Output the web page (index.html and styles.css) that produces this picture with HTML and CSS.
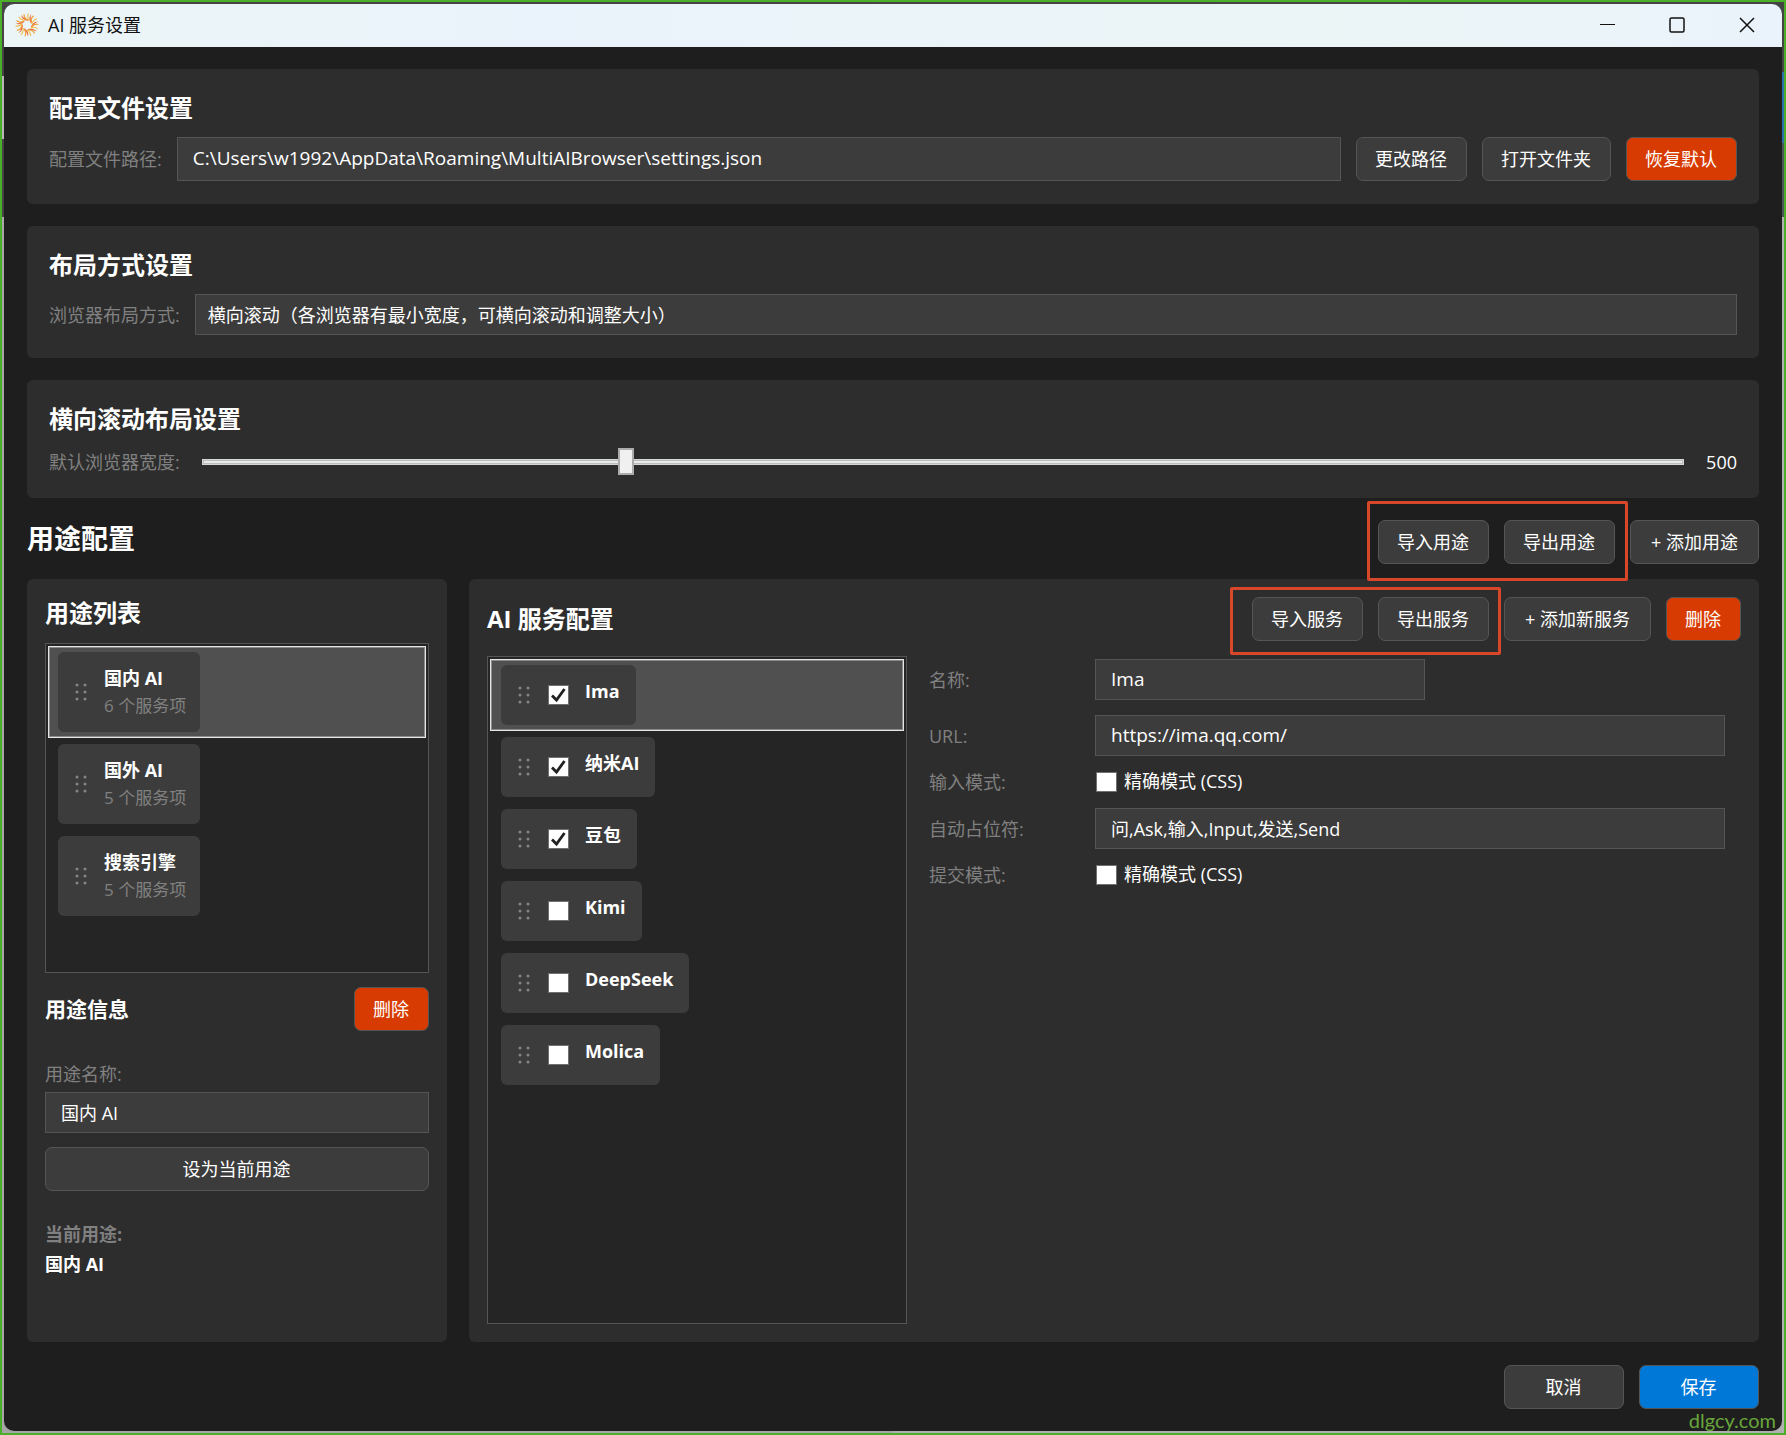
FILE: index.html
```html
<!DOCTYPE html>
<html lang="zh-CN">
<head>
    <meta charset="UTF-8">
    <title>AI 服务设置</title>
    <link rel="stylesheet" href="styles.css">
</head>
<body>
    <!-- 拖动手柄图标 -->
    <svg class="defs" aria-hidden="true">
        <symbol id="grip" viewBox="0 0 12 18">
            <g fill="#858585">
                <circle cx="2" cy="2" r="1.5"/><circle cx="10" cy="2" r="1.5"/>
                <circle cx="2" cy="9" r="1.5"/><circle cx="10" cy="9" r="1.5"/>
                <circle cx="2" cy="16" r="1.5"/><circle cx="10" cy="16" r="1.5"/>
            </g>
        </symbol>
    </svg>

    <div class="window">
        <!-- 标题栏 -->
        <header class="titlebar">
            <svg class="app-icon" viewBox="0 0 24 24" fill="none">
                <defs>
                    <g id="flame">
                        <path d="M12.500 7.800C9.500 7.200 6.500 5.500 6 1.800C7.500 4.500 10 5.500 14 7.500Z" fill="#e8683a"/>
                        <path d="M13 7C10.500 6 8.800 4 9 1" stroke="#f0a03c" stroke-width="1.200"/>
                        <path d="M10 7.500C7 7.200 5 6 3.800 3.800" stroke="#f3bd4e" stroke-width="1.100"/>
                    </g>
                </defs>
                <use href="#flame"/>
                <use href="#flame" transform="rotate(51.430 12 12)"/>
                <use href="#flame" transform="rotate(102.860 12 12)"/>
                <use href="#flame" transform="rotate(154.290 12 12)"/>
                <use href="#flame" transform="rotate(205.710 12 12)"/>
                <use href="#flame" transform="rotate(257.140 12 12)"/>
                <use href="#flame" transform="rotate(308.570 12 12)"/>
            </svg>
            <span class="window-title">AI 服务设置</span>
            <div class="window-controls">
                <button type="button" aria-label="最小化"><svg viewBox="0 0 16 16"><path class="thin" d="M1 7.500H16"/></svg></button>
                <button type="button" aria-label="最大化"><svg viewBox="0 0 16 16"><rect x="1" y="1" width="14" height="14" rx="1.500"/></svg></button>
                <button type="button" aria-label="关闭"><svg viewBox="0 0 16 16"><path d="M1 1L15 15M15 1L1 15"/></svg></button>
            </div>
        </header>

        <main class="content">
            <!-- 配置文件 -->
            <section class="card">
                <h2>配置文件设置</h2>
                <div class="row">
                    <label for="config-path">配置文件路径:</label>
                    <input id="config-path" class="field path latin" type="text" value="C:\Users\w1992\AppData\Roaming\MultiAIBrowser\settings.json" readonly>
                    <button type="button" class="btn">更改路径</button>
                    <button type="button" class="btn">打开文件夹</button>
                    <button type="button" class="btn danger">恢复默认</button>
                </div>
            </section>

            <!-- 布局方式 -->
            <section class="card">
                <h2>布局方式设置</h2>
                <div class="row">
                    <label for="layout-mode">浏览器布局方式:</label>
                    <select id="layout-mode" class="field">
                        <option>横向滚动（各浏览器有最小宽度，可横向滚动和调整大小）</option>
                    </select>
                </div>
            </section>

            <!-- 横向滚动布局 -->
            <section class="card">
                <h2>横向滚动布局设置</h2>
                <div class="row slider-row">
                    <label for="browser-width">默认浏览器宽度:</label>
                    <input id="browser-width" type="range" min="330" max="930" value="500">
                    <output for="browser-width">500</output>
                </div>
            </section>

            <!-- 用途配置 -->
            <div class="section-header">
                <h1>用途配置</h1>
                <div class="actions">
                    <div class="marked mark-purpose">
                        <button type="button" class="btn">导入用途</button>
                        <button type="button" class="btn">导出用途</button>
                    </div>
                    <button type="button" class="btn add">+ 添加用途</button>
                </div>
            </div>

            <div class="panels">
                <section class="panel">
                    <h2>用途列表</h2>
                    <ul class="list purpose-list">
                        <li class="selected">
                            <div class="chip">
                                <svg class="grip"><use href="#grip"/></svg>
                                <div><strong>国内 AI</strong><small>6 个服务项</small></div>
                            </div>
                        </li>
                        <li>
                            <div class="chip">
                                <svg class="grip"><use href="#grip"/></svg>
                                <div><strong>国外 AI</strong><small>5 个服务项</small></div>
                            </div>
                        </li>
                        <li>
                            <div class="chip">
                                <svg class="grip"><use href="#grip"/></svg>
                                <div><strong>搜索引擎</strong><small>5 个服务项</small></div>
                            </div>
                        </li>
                    </ul>

                    <div class="info-header">
                        <h3>用途信息</h3>
                        <button type="button" class="btn danger">删除</button>
                    </div>
                    <div class="stack">
                        <label for="purpose-name">用途名称:</label>
                        <input id="purpose-name" class="field" type="text" value="国内 AI">
                    </div>
                    <button type="button" class="btn wide">设为当前用途</button>
                    <div class="stack current">
                        <span class="muted">当前用途:</span>
                        <span>国内 AI</span>
                    </div>
                </section>

                <section class="panel">
                    <div class="panel-header">
                        <h2>AI 服务配置</h2>
                        <div class="actions">
                            <div class="marked mark-service">
                                <button type="button" class="btn">导入服务</button>
                                <button type="button" class="btn">导出服务</button>
                            </div>
                            <button type="button" class="btn add">+ 添加新服务</button>
                            <button type="button" class="btn danger">删除</button>
                        </div>
                    </div>

                    <div class="service-body">
                        <ul class="list service-list">
                            <li class="selected">
                                <div class="chip"><svg class="grip"><use href="#grip"/></svg><input id="s1" type="checkbox" checked><label for="s1">Ima</label></div>
                            </li>
                            <li>
                                <div class="chip"><svg class="grip"><use href="#grip"/></svg><input id="s2" type="checkbox" checked><label for="s2">纳米AI</label></div>
                            </li>
                            <li>
                                <div class="chip"><svg class="grip"><use href="#grip"/></svg><input id="s3" type="checkbox" checked><label for="s3">豆包</label></div>
                            </li>
                            <li>
                                <div class="chip"><svg class="grip"><use href="#grip"/></svg><input id="s4" type="checkbox"><label for="s4">Kimi</label></div>
                            </li>
                            <li>
                                <div class="chip"><svg class="grip"><use href="#grip"/></svg><input id="s5" type="checkbox"><label for="s5">DeepSeek</label></div>
                            </li>
                            <li>
                                <div class="chip"><svg class="grip"><use href="#grip"/></svg><input id="s6" type="checkbox"><label for="s6">Molica</label></div>
                            </li>
                        </ul>

                        <form class="service-form">
                            <label for="name">名称:</label>
                            <input id="name" class="field short latin" type="text" value="Ima">

                            <label for="url">URL:</label>
                            <input id="url" class="field latin" type="text" value="https://ima.qq.com/">

                            <span class="muted">输入模式:</span>
                            <label class="check"><input type="checkbox"><span>精确模式 (CSS)</span></label>

                            <label for="placeholders">自动占位符:</label>
                            <input id="placeholders" class="field" type="text" value="问,Ask,输入,Input,发送,Send">

                            <span class="muted">提交模式:</span>
                            <label class="check"><input type="checkbox"><span>精确模式 (CSS)</span></label>
                        </form>
                    </div>
                </section>
            </div>

            <!-- 底部按钮 -->
            <footer class="footer">
                <button type="button" class="btn">取消</button>
                <button type="button" class="btn primary">保存</button>
            </footer>
        </main>
    </div>
    <div class="watermark">dlgcy.com</div>
</body>
</html>
```
FILE: styles.css
```css
* {
    box-sizing: border-box;
}

body {
    margin: 0;
    min-height: 100vh;
    display: flex;
    padding: 2px;
    border: 2px solid #4caf2a;
    background:
        linear-gradient(#444 76px, #b5b5b5 76px 139px, #444 139px 217px, #a6a6a6 217px) left / 50% 100% no-repeat,
        linear-gradient(#444 72px, #2f6fa8 72px 143px, #4a5558 143px 217px, #b0b0b0 217px) right / 50% 100% no-repeat;
    font-family: "Open Sans", "Noto Sans CJK SC", sans-serif;
    font-size: 18px;
    line-height: 24px;
    color: #fff;
}

h1, h2, h3, ul {
    margin: 0;
    padding: 0;
}

h1 {
    font-size: 27px;
    line-height: 38px;
}

h2 {
    font-size: 24px;
    line-height: 32px;
}

h3 {
    font-size: 21px;
    line-height: 28px;
}

label, .muted {
    color: #808080;
}

button, input, select {
    font: inherit;
    color: inherit;
    margin: 0;
}

.defs {
    position: absolute;
    width: 0;
    height: 0;
}

/* 窗口 */
.window {
    flex: 1;
    display: flex;
    flex-direction: column;
    border-radius: 10px;
    overflow: hidden;
    background: #1e1e1e;
}

.titlebar {
    display: flex;
    align-items: center;
    height: 43px;
    padding: 0 0 2px 11px;
    background: linear-gradient(90deg, #ebf5f6, #eaf3fb 30%, #ebf5f6 75%, #eaf3fb);
    color: #111;
}

.app-icon {
    width: 24px;
    height: 24px;
    margin-right: 9px;
}

.window-controls {
    display: flex;
    margin-left: auto;
}

.window-controls button {
    width: 70px;
    height: 40px;
    padding: 0;
    border: none;
    background: none;
}

.window-controls svg {
    display: block;
    width: 16px;
    height: 16px;
    margin: auto;
    fill: none;
    stroke: #111;
    stroke-width: 1.5;
}

.window-controls .thin {
    stroke-width: 1;
}

/* 内容区 */
.content {
    flex: 1;
    display: flex;
    flex-direction: column;
    padding: 22px 23px;
}

.card {
    margin-bottom: 22px;
    padding: 23px 22px;
    border-radius: 6px;
    background: #2d2d2d;
}

.row {
    display: flex;
    align-items: center;
    gap: 15px;
    margin-top: 13px;
}

.slider-row {
    gap: 22px;
    height: 27px;
}

.field {
    flex: 1;
    min-width: 0;
    width: 100%;
    height: 41px;
    padding: 0 15px 2px;
    border: 1px solid #555;
    border-radius: 0;
    background: #3c3c3c;
    outline: none;
}

.field.path {
    height: 44px;
}

.field.latin {
    font-size: 19px;
}

select.field {
    appearance: none;
    padding: 0 12px;
}

/* 按钮 */
.btn {
    height: 44px;
    padding: 0 19px 0 18px;
    border: 1px solid #555;
    border-radius: 7px;
    background: #3c3c3c;
    white-space: nowrap;
}

.btn.add {
    padding: 0 20px;
}

.btn.danger {
    background: #d83b01;
}

.btn.primary {
    background: #0078d7;
}

.btn.wide {
    width: 100%;
    margin-top: 14px;
}

/* 滑块 */
input[type="range"] {
    appearance: none;
    flex: 1;
    height: 27px;
    background: none;
}

input[type="range"]::-webkit-slider-runnable-track {
    height: 6px;
    border: 1px solid #d6d6d6;
    background: #e7eaea;
    box-shadow: inset 0 0 0 1px #bbb;
}

input[type="range"]::-webkit-slider-thumb {
    appearance: none;
    width: 16px;
    height: 27px;
    margin-top: -12px;
    border: 2px solid #acacac;
    background: #f0f0f0;
}

/* 复选框 */
input[type="checkbox"] {
    appearance: none;
    flex: none;
    width: 21px;
    height: 20px;
    border: 1px solid #707070;
    background: #fff;
}

input[type="checkbox"]:checked {
    background: #fff url("data:image/svg+xml,%3Csvg xmlns='http://www.w3.org/2000/svg' viewBox='0 0 19 18'%3E%3Cpath d='M3 9.500L7.500 14L15.500 3' fill='none' stroke='%23212121' stroke-width='2.800'/%3E%3C/svg%3E") center / 19px 18px no-repeat;
}

/* 标题行 */
.section-header {
    display: flex;
    justify-content: space-between;
    margin-bottom: 15px;
}

.actions, .marked {
    display: flex;
    gap: 15px;
}

/* 红色标注框 */
.marked {
    position: relative;
}

.marked::after {
    content: "";
    position: absolute;
    border: 3px solid #d9472b;
    border-radius: 2px;
    pointer-events: none;
}

.mark-purpose::after {
    inset: -19px -13px -17px -11px;
}

.mark-service::after {
    inset: -10px -12px -14px -22px;
}

/* 面板 */
.panels {
    flex: 1;
    display: grid;
    grid-template-columns: 420px 1fr;
    gap: 22px;
}

.panel {
    display: flex;
    flex-direction: column;
    padding: 18px;
    border-radius: 6px;
    background: #2d2d2d;
}

.panel-header {
    display: flex;
    align-items: center;
    justify-content: space-between;
    margin-bottom: 15px;
}

.list {
    padding: 2px;
    border: 1px solid #555;
    background: #252525;
    list-style: none;
}

.list li {
    display: flex;
    padding: 5px 9px;
    border: 1px solid transparent;
}

.list li.selected {
    border-color: #e6e6e6;
    background: #505050;
    box-shadow: inset 0 0 0 1px #8a8a8a;
}

.chip {
    display: flex;
    align-items: center;
    padding: 0 15px 0 16px;
    border-radius: 6px;
    background: #3c3c3c;
}

.grip {
    width: 14px;
    height: 18px;
}

.purpose-list {
    height: 330px;
    margin-top: 14px;
}

.purpose-list .chip {
    height: 80px;
    padding-right: 14px;
}

.purpose-list .grip {
    margin-right: 16px;
}

.chip strong, .chip small {
    display: block;
    line-height: 28px;
}

.chip small {
    font-size: 17px;
    color: #808080;
}

.info-header {
    display: flex;
    align-items: center;
    justify-content: space-between;
    margin: 14px 0 31px;
}

.stack {
    display: flex;
    flex-direction: column;
    gap: 6px;
}

.stack .field {
    flex: none;
}

.current {
    margin-top: 31px;
    font-weight: bold;
}

/* 服务列表与表单 */
.service-body {
    flex: 1;
    display: grid;
    grid-template-columns: 420px 1fr;
    gap: 22px;
}

.service-list li {
    padding-left: 10px;
}

.service-list .chip {
    height: 60px;
    padding-right: 16px;
}

.service-list .grip {
    margin-right: 17px;
}

.service-list label {
    margin-left: 16px;
    padding-bottom: 8px;
    font-weight: bold;
    color: #fff;
}

.service-form {
    display: grid;
    grid-template-columns: 166px 1fr;
    align-content: start;
    align-items: center;
    gap: 15px 0;
    padding: 3px 16px 0 0;
    line-height: 22px;
}

.field.short {
    width: 330px;
}

.check {
    display: flex;
    align-items: center;
    gap: 7px;
    height: 22px;
    padding-left: 1px;
    color: #fff;
}

.check span {
    padding-bottom: 2px;
}

/* 底部 */
.footer {
    display: flex;
    justify-content: flex-end;
    gap: 15px;
    margin-top: 23px;
}

.footer .btn {
    min-width: 120px;
}

.watermark {
    position: absolute;
    right: 10px;
    bottom: 3px;
    font-family: Lato, sans-serif;
    font-size: 20px;
    color: #68a63c;
}
```
